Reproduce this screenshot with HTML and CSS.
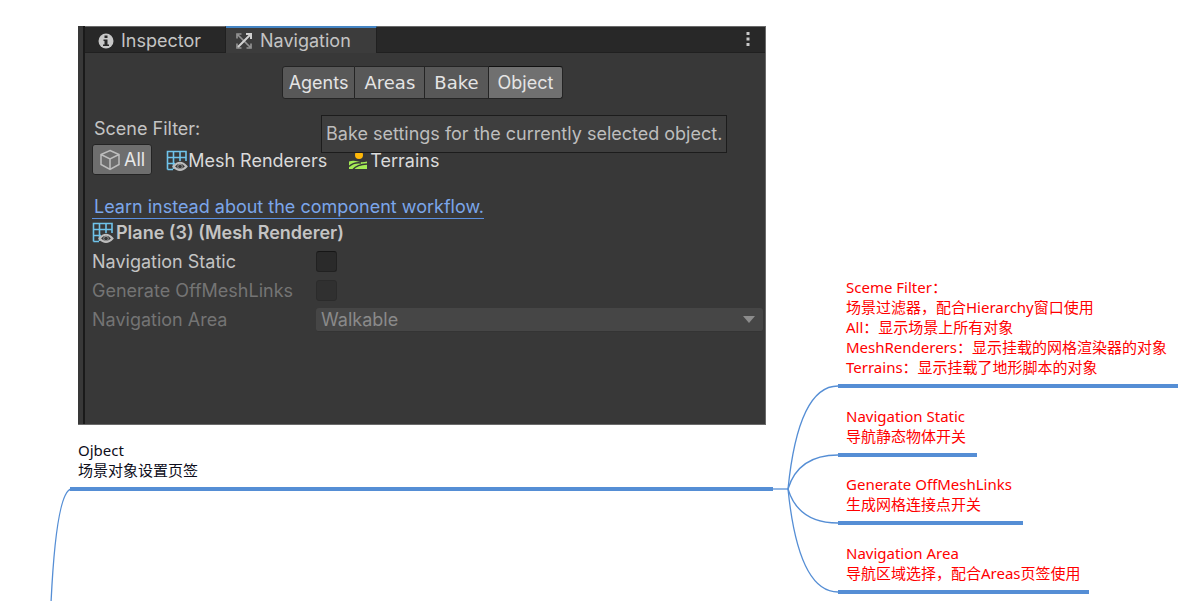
FILE: index.html
```html
<!DOCTYPE html>
<html lang="zh-CN">
<head>
<meta charset="utf-8">
<title>Navigation - Object</title>
<link rel="stylesheet" href="styles.css">
</head>
<body>
<svg class="defs" aria-hidden="true">
  <symbol id="mesh" viewBox="0 0 22 22">
    <path d="M1.500 19.500V1.500H20V11M1.500 7.500H20M1.500 13.500H9M7.500 1.500V19M14 1.500V11M1.500 19.500H7" fill="none" stroke="#6fc3ea" stroke-width="1.600"/>
    <path d="M7.500 16.500Q14 9 20.500 16.500Q14 23.500 7.500 16.500Z" fill="#383838" stroke="#bdbdbd" stroke-width="2"/>
    <circle cx="14" cy="16.500" r="2.300" fill="#383838" stroke="#999" stroke-width="1"/>
  </symbol>
</svg>
<main class="canvas">
  <svg class="links" width="1204" height="601" aria-hidden="true">
    <path d="M51 603C54 540 60 492 71 489"/>
    <path d="M773 489H788"/>
    <path d="M788 489C795 420 812 386 838 386"/>
    <path d="M788 489C795 466 812 455 838 455"/>
    <path d="M788 489C795 512 812 523 838 523"/>
    <path d="M788 489C795 558 812 592 838 592"/>
  </svg>

  <article class="node root">
    <section class="editor">
      <div class="gutter"></div>
      <div class="window">
        <header class="tabs">
          <button class="tab" type="button">
            <svg width="16" height="16" viewBox="0 0 16 16"><circle cx="8" cy="8" r="7.500" fill="#c8c8c8"/><path d="M6.500 2.500h3v2.500h-3zM5.500 6.500h4v5h1.500v1.500h-6v-1.500h1.500V8h-1z" fill="#282828"/></svg>
            Inspector
          </button>
          <button class="tab active" type="button">
            <svg width="16" height="16" viewBox="0 0 16 16" fill="none" stroke="#929292" stroke-width="1.700"><path d="M2 2l12 12M1 5.500V1h4.500M1 10.500V15h4.500M10.500 15H15v-4.500"/><path d="M2 14L14 2M10 1h5v5" stroke="#d0d0d0" stroke-width="2"/></svg>
            Navigation
          </button>
          <button class="menu" type="button" aria-label="Menu"><svg width="4" height="16" viewBox="0 0 4 16" fill="#c8c8c8"><path d="M0.500 1h3v3h-3zM0.500 6.500h3v3h-3zM0.500 12h3v3h-3z"/></svg></button>
        </header>
        <div class="body">
          <div class="modes">
            <button type="button">Agents</button>
            <button type="button" class="wide">Areas</button>
            <button type="button" class="wide">Bake</button>
            <button type="button" class="on">Object<span class="tooltip" role="tooltip">Bake settings for the currently selected object.</span></button>
          </div>
          <div class="caption">Scene Filter:</div>
          <div class="filters">
            <button type="button" class="on"><svg width="22" height="22" viewBox="0 0 22 22" fill="none" stroke="#bebebe" stroke-width="1.500"><path d="M11 1.500L20 5.500V15.500L11 20.500L2 15.500V5.500ZM2 5.500L11 10L20 5.500M11 10V20.500"/></svg>All</button>
            <button type="button" class="mesh-filter"><svg width="22" height="22"><use href="#mesh"/></svg>Mesh Renderers</button>
            <button type="button"><svg class="terrain" width="20" height="20" viewBox="0 0 20 20"><circle cx="11" cy="4" r="4" fill="#ffb808"/><path d="M1 10.500Q5 9 10 10.500Q14 12 19 10.500V18H1Z" fill="#a5ec55"/><path d="M1 15.500Q6 11 13 12M5 18.500Q9 13.500 19 13" fill="none" stroke="#383838" stroke-width="1.500"/></svg>Terrains</button>
          </div>
          <a class="learn" href="#">Learn instead about the component workflow.</a>
          <h2 class="object"><svg width="22" height="22"><use href="#mesh"/></svg>Plane (3) (Mesh Renderer)</h2>
          <div class="field"><label for="static">Navigation Static</label><input id="static" type="checkbox"></div>
          <div class="field off"><label for="offmesh">Generate OffMeshLinks</label><input id="offmesh" type="checkbox" disabled></div>
          <div class="field off"><label for="area">Navigation Area</label>
            <div class="select"><select id="area" disabled><option>Walkable</option></select><svg width="12" height="7" viewBox="0 0 12 7"><path d="M0 0H12L6 7Z" fill="#8c8c8c"/></svg></div>
          </div>
        </div>
      </div>
    </section>
    <p>Ojbect<br>场景对象设置页签</p>
  </article>

  <article class="node note filter-note"><p>Sceme Filter：<br>场景过滤器，配合Hierarchy窗口使用<br>All：显示场景上所有对象<br>MeshRenderers：显示挂载的网格渲染器的对象<br>Terrains：显示挂载了地形脚本的对象</p></article>
  <article class="node note static-note"><p>Navigation Static<br>导航静态物体开关</p></article>
  <article class="node note link-note"><p>Generate OffMeshLinks<br>生成网格连接点开关</p></article>
  <article class="node note area-note"><p>Navigation Area<br>导航区域选择，配合Areas页签使用</p></article>
</main>
</body>
</html>
```
FILE: styles.css
```css
* { box-sizing: border-box; }
body { margin: 0; background: #fff; }
.defs { position: absolute; width: 0; height: 0; }
.canvas { position: relative; height: 100vh; overflow: hidden; }
.links { position: absolute; left: 0; top: 0; fill: none; stroke: #558ed5; stroke-width: 1.3; }

/* mind map nodes */
.node {
  position: absolute;
  padding: 0 7px 7px 8px;
  border-bottom: 4px solid #558ed5;
  font: 15px/20px "Noto Sans", "Noto Sans CJK SC", sans-serif;
  white-space: nowrap;
  color: #0d0d1a;
}
.node p { margin: 0; }
.root { left: 70px; top: 26px; }
.root p { margin-top: 15px; }
.note { padding-right: 11px; color: #f00; }
.filter-note { left: 838px; top: 277px; }
.static-note { left: 838px; top: 406px; }
.link-note { left: 838px; top: 474px; }
.area-note { left: 838px; top: 543px; padding-right: 8px; }

/* editor window */
.editor {
  display: flex;
  width: 688px;
  min-height: 399px;
  background: #383838;
  border: solid #6a6a6a;
  border-width: 0 1px 1px 0;
  color: #c4c4c4;
  font: 18px/24px Inter, sans-serif;
}
.gutter { width: 7px; border-right: 2px solid #1a1a1a; }
.window { flex: 1; }
.editor button {
  margin: 0;
  border: 0;
  background: none;
  color: inherit;
  font: inherit;
  display: flex;
  align-items: center;
}
.tabs { display: flex; height: 27px; background: #282828; border-bottom: 1px solid #202020; }
.editor .tab { height: 27px; gap: 7px; padding: 2px 24px 0 13px; border-top: 1px solid #6a6a6a; border-right: 1px solid #202020; }
.editor .tab.active { background: #3c3c3c; border-top: 2px solid #4585c4; padding: 1px 25px 0 10px; gap: 8px; }
.editor .menu { flex: 1; justify-content: flex-end; padding: 0 15px 2px; border-top: 1px solid #6a6a6a; }
.body { padding: 13px 2px 0 7px; }

.modes { display: flex; justify-content: center; height: 33px; padding-right: 10px; }
.editor .modes button {
  position: relative;
  padding: 0 9px;
  background: #585858;
  border: 1px solid #242424;
  border-left-width: 0;
  color: #e4e4e4;
}
.editor .modes .wide { font-family: "DejaVu Sans", sans-serif; }
.editor .modes button:first-child { padding: 0 6px; border-left-width: 1px; border-radius: 3px 0 0 3px; }
.editor .modes button.on { background: #707070; border-top-color: #111; border-radius: 0 3px 3px 0; }
.tooltip {
  position: absolute;
  top: 48px;
  right: -165px;
  padding: 6px 4px;
  border: 1px solid #1c1c1c;
  background: #3e3e3e;
  color: #bdbdbd;
  line-height: 24px;
  white-space: nowrap;
}

.caption { margin-top: 15px; padding-left: 2px; line-height: 30px; }
.filters { display: flex; height: 31px; }
.editor .filters button { padding: 2px 8px 0; color: #dadada; }
.editor .filters .on { padding: 0 6px; gap: 3px; background: #6e6e6e; border: 1px solid #242424; border-radius: 3px; color: #e8e8e8; }
.editor .filters .mesh-filter { padding: 2px 13px 0 14px; }
.terrain { margin-right: 2px; }
.learn {
  display: block;
  width: fit-content;
  margin-top: 21px;
  padding-left: 2px;
  border-bottom: 1px solid #5b8fdf;
  color: #7ba6ea;
  line-height: 22px;
  text-decoration: none;
}
.object { display: flex; align-items: center; gap: 2px; height: 28px; margin: 0; font-size: 18px; font-weight: 600; }
.field { display: grid; grid-template-columns: 224px 1fr; align-items: center; height: 29px; }
.field.off { color: #747474; }
.field input {
  appearance: none;
  width: 21px;
  height: 21px;
  margin: 0;
  background: #2a2a2a;
  border: 1px solid #212121;
  border-top-color: #161616;
  border-radius: 3px;
}
.field input:disabled { background: #303030; border-color: #2b2b2b; }
.select { display: grid; align-items: center; }
.select select, .select svg { grid-area: 1 / 1; }
.select svg { justify-self: end; margin-right: 8px; }
.select select {
  appearance: none;
  width: 100%;
  height: 24px;
  padding: 0 5px;
  border: 0;
  border-bottom: 1px solid #343434;
  border-radius: 3px;
  background: #464646;
  color: #8a8a8a;
  font: inherit;
  opacity: 1;
}
```
